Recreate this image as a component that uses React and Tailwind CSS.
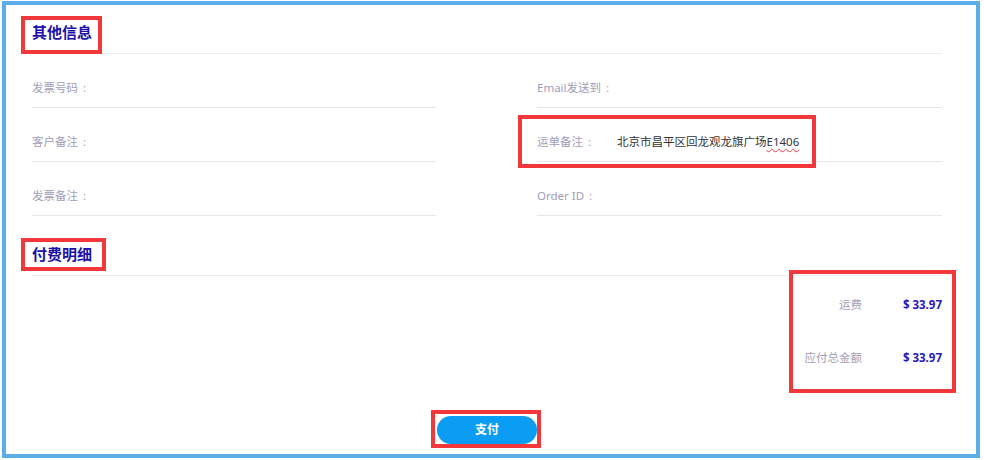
import React from "react";

const FONT = { fontFamily: '"Noto Sans", "Noto Sans CJK SC", sans-serif' };

// red annotation frame drawn over highlighted content
function Mark({ className }) {
  return <div className={`pointer-events-none absolute border-[4px] border-[#f2383a] ${className}`} />;
}

function Field({ label, value, mark }) {
  return (
    <div className="relative h-[54px] border-b border-[#e6e6ef] pt-[24px]">
      <div className="flex items-center h-[20px] text-[11.5px] leading-[20px]">
        <span className="w-[80px] shrink-0 text-[#9f9eb8]">
          {label}
          <span className="ml-[5px]">:</span>
        </span>
        {value && (
          <span className="text-[#333]">
            {value}
            <span className="underline decoration-wavy decoration-[#f0393c] decoration-1 underline-offset-2">E1406</span>
          </span>
        )}
      </div>
      {mark && <Mark className="left-[-19px] top-[7px] w-[298px] h-[53px]" />}
    </div>
  );
}

function SectionTitle({ title, pt, markClass }) {
  return (
    <div className={`border-b border-[#ececf2] pb-[11px] ${pt}`}>
      <div className="relative w-fit">
        <h3 className="text-[15px] leading-[20px] font-bold text-[#1d10a8]">{title}</h3>
        <Mark className={markClass} />
      </div>
    </div>
  );
}

export default function App() {
  return (
    <div className="w-[984px] h-[460px] bg-white pt-[1px] pl-[2px]" style={FONT}>
      <div className="w-[978px] h-[457px] border-[4px] border-[#5caeea] flex flex-col">
        <div className="ml-[26px] mr-[34px]">
          <SectionTitle
            title="其他信息"
            pt="pt-[17px]"
            markClass="left-[-11px] top-[-6px] w-[81px] h-[38px]"
          />

          <div className="grid grid-cols-[404px_405px] gap-x-[101px]">
            <Field label="发票号码" />
            <Field label="Email发送到" />
            <Field label="客户备注" />
            <Field label="运单备注" value="北京市昌平区回龙观龙旗广场" mark />
            <Field label="发票备注" />
            <Field label="Order ID" />
          </div>

          <SectionTitle
            title="付费明细"
            pt="pt-[28px]"
            markClass="left-[-11px] top-[-6px] w-[85px] h-[33px]"
          />

          <div className="flex justify-end">
            <div className="relative pt-[2px] text-[11.5px]">
              <div className="h-[53px] flex items-center justify-end">
                <span className="text-[#9f9eb8]">运费</span>
                <span className="w-[80px] text-right font-bold text-[#2a18b8]">$ 33.97</span>
              </div>
              <div className="h-[53px] flex items-center justify-end">
                <span className="text-[#9f9eb8]">应付总金额</span>
                <span className="w-[80px] text-right font-bold text-[#2a18b8]">$ 33.97</span>
              </div>
              <Mark className="left-[-16px] right-[-14px] top-[-6px] bottom-[-9px]" />
            </div>
          </div>

          <div className="flex justify-center mt-[32px]">
            <div className="relative">
              <button className="block w-[100px] h-[28px] rounded-full bg-[#0b9df3] text-white text-[12px] font-bold">
                支付
              </button>
              <Mark className="left-[-6px] right-[-4px] top-[-6px] bottom-[-4px]" />
            </div>
          </div>
        </div>
      </div>
    </div>
  );
}
